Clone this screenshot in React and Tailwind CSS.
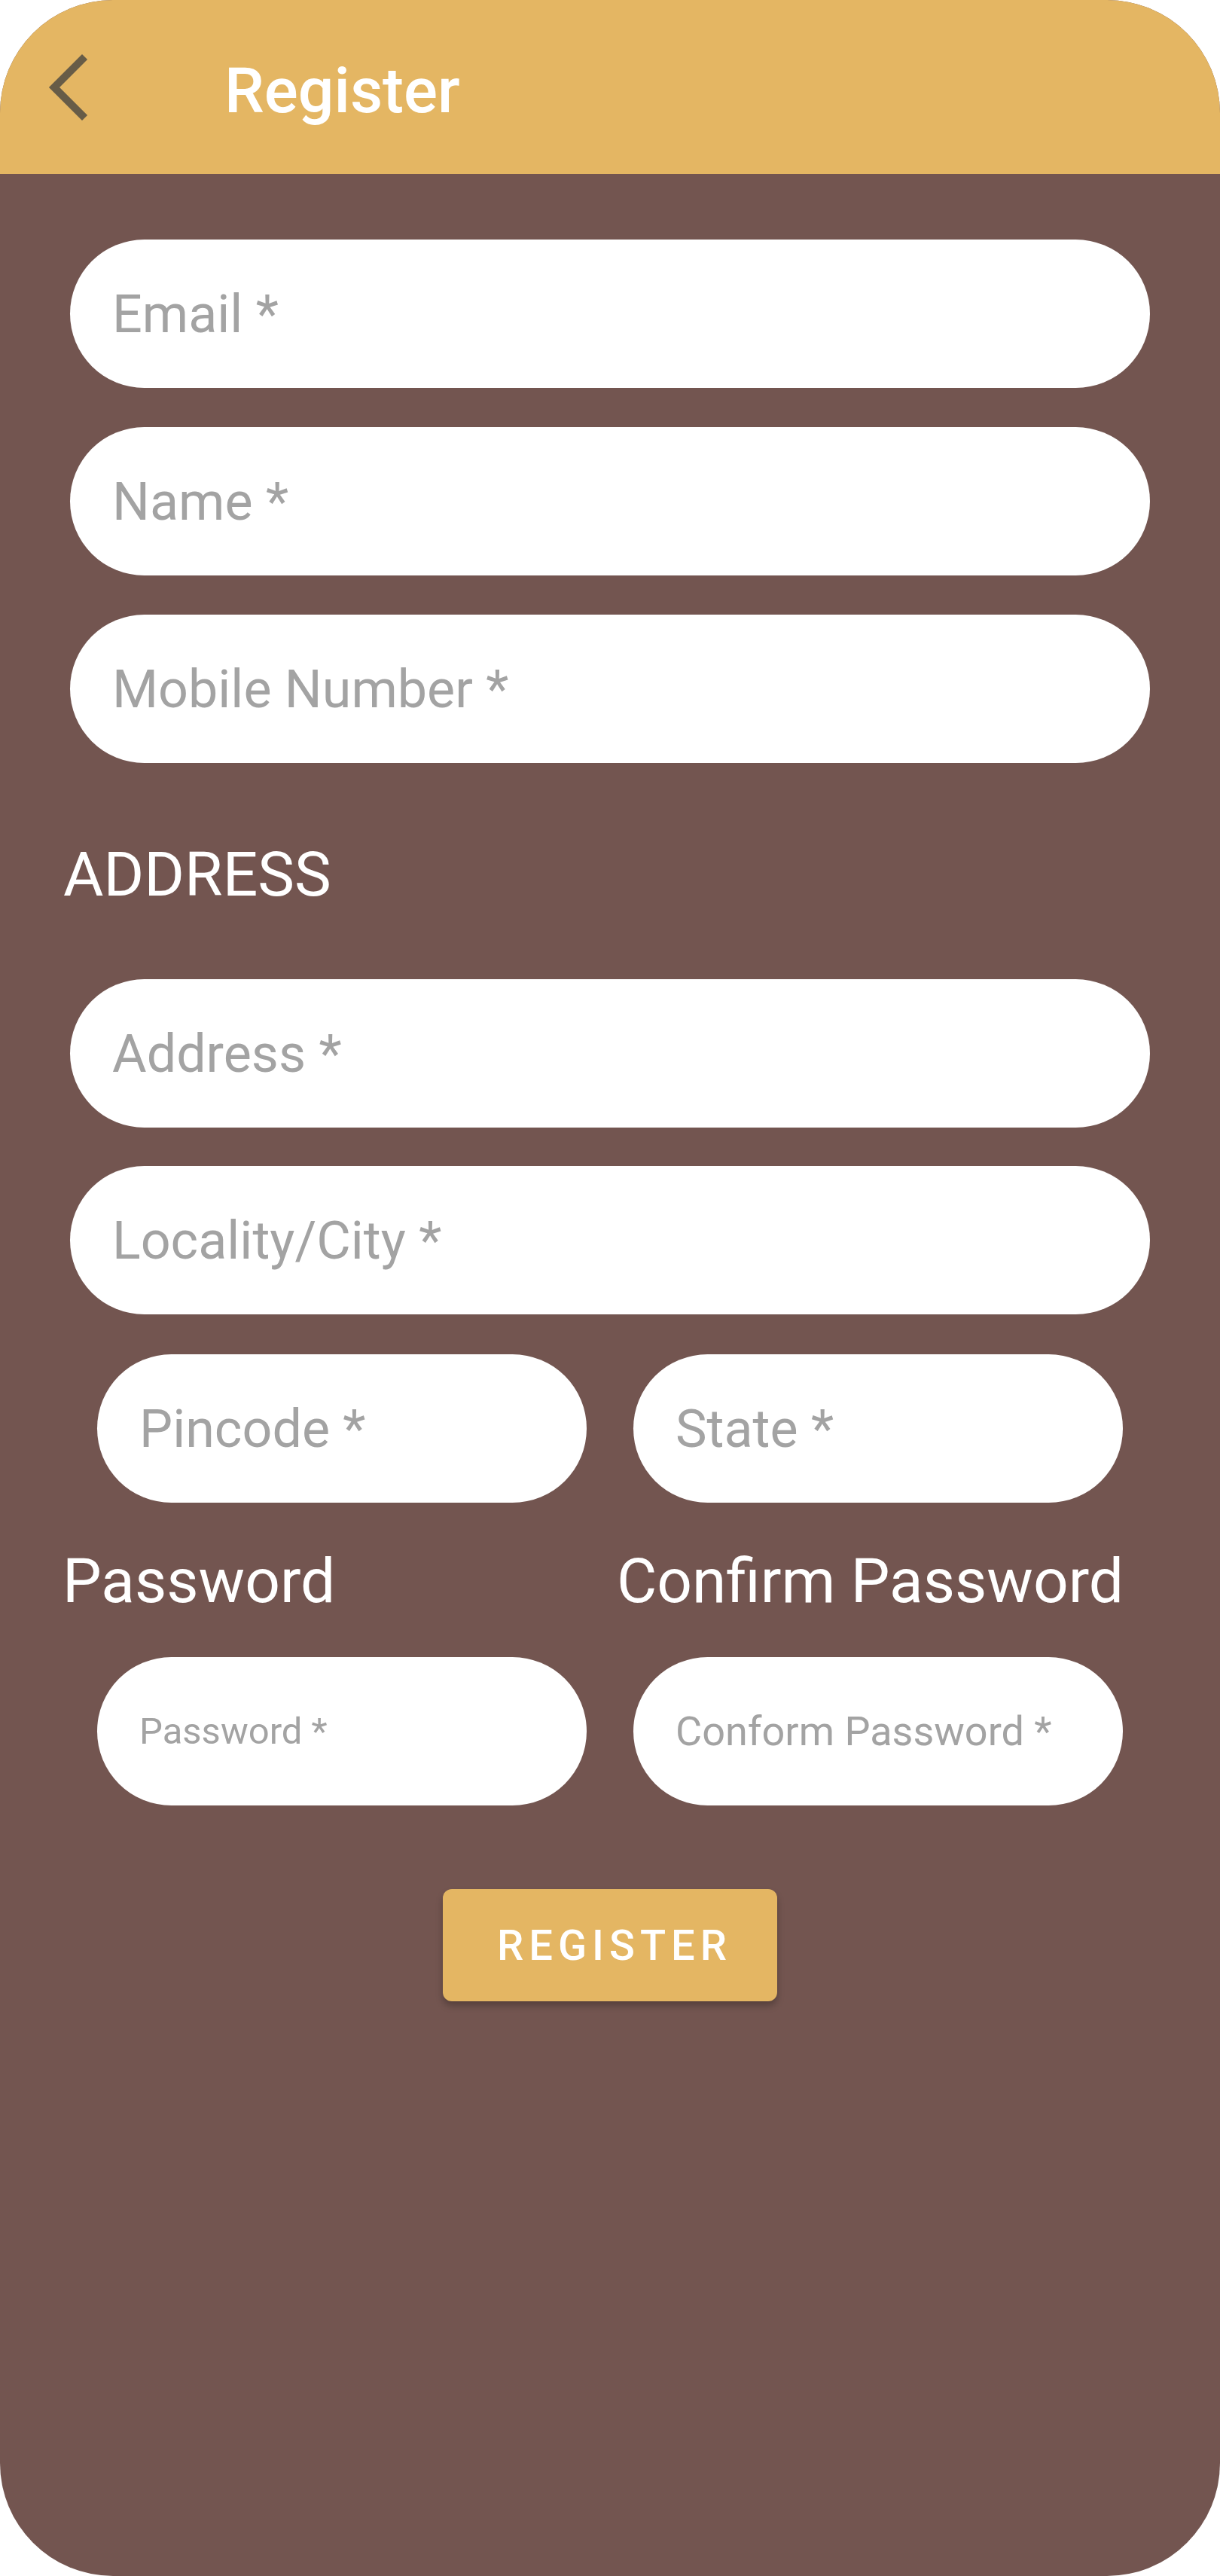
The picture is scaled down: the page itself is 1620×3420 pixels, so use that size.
import React from 'react';

const Field = ({ placeholder, size = 'text-[70px]' }) => (
    <div className="h-[197px] bg-white rounded-full flex items-center px-[56px]">
        <span className={`${size} leading-none text-[#a3a3a3] whitespace-nowrap`}>{placeholder}</span>
    </div>
);

const BackChevron = () => (
    <svg width="56" height="92" viewBox="0 0 56 92" fill="none">
        <path d="M47 9 L10 46 L47 83" stroke="#675c47" strokeWidth="10" strokeLinejoin="miter" strokeLinecap="square" />
    </svg>
);

export default function App() {
    return (
        <div className="w-[1620px] h-[3420px] bg-white font-['Roboto',sans-serif]">
            <div className="h-full rounded-[150px] overflow-hidden bg-[#735550] flex flex-col">
                <header className="h-[231px] shrink-0 bg-[#e4b663] flex items-center pl-[62px]">
                    <BackChevron />
                    <h1 className="ml-[180px] pt-[10px] text-[84px] leading-none font-medium text-white">Register</h1>
                </header>

                <main className="px-[93px] pt-[87px] flex flex-col">
                    <Field placeholder="Email *" />
                    <div className="mt-[52px]"><Field placeholder="Name *" /></div>
                    <div className="mt-[52px]"><Field placeholder="Mobile Number *" /></div>

                    <h2 className="mt-[107px] -ml-[9px] text-[82px] leading-none text-white">ADDRESS</h2>

                    <div className="mt-[98px]"><Field placeholder="Address *" /></div>
                    <div className="mt-[51px]"><Field placeholder="Locality/City *" /></div>

                    <div className="mt-[53px] px-[36px] grid grid-cols-2 gap-[62px]">
                        <Field placeholder="Pincode *" />
                        <Field placeholder="State *" />
                    </div>

                    <div className="mt-[63px] -ml-[10px] pr-[35px] flex justify-between text-[82px] leading-none text-white">
                        <span>Password</span>
                        <span>Confirm Password</span>
                    </div>

                    <div className="mt-[60px] px-[36px] grid grid-cols-2 gap-[62px]">
                        <Field placeholder="Password *" size="text-[49px]" />
                        <Field placeholder="Conform Password *" size="text-[54px]" />
                    </div>

                    <div className="mt-[111px] flex justify-center">
                        <button className="w-[444px] h-[149px] pl-[12px] rounded-[12px] bg-[#e4b663] text-white text-[56px] font-medium tracking-[7px] shadow-[0_6px_10px_rgba(0,0,0,0.25)]">
                            REGISTER
                        </button>
                    </div>
                </main>
            </div>
        </div>
    );
}
